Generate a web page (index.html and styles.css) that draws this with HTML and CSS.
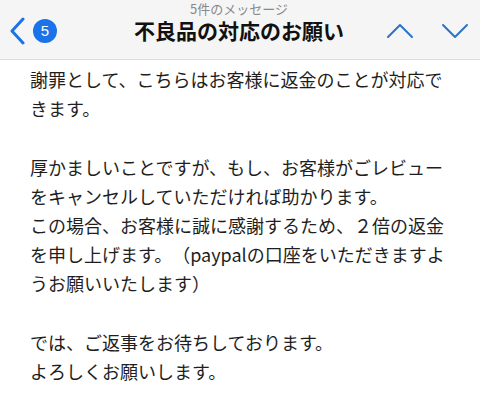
FILE: index.html
```html
<!DOCTYPE html>
<html lang="ja">
<head>
  <meta charset="UTF-8" />
  <title>不良品の対応のお願い</title>
  <link rel="stylesheet" href="styles.css">
</head>
<body>
  <div class="nav-bar">
    <div class="nav-left">
      <svg class="back" width="16" height="28" viewBox="0 0 16 28">
        <path d="M14 2 L3 14 L14 26" fill="none" stroke="#1a73e8" stroke-width="3" stroke-linecap="round" stroke-linejoin="round"/>
      </svg>
      <span class="badge">5</span>
    </div>

    <div class="nav-title">
      <div class="sub">5件のメッセージ</div>
      <div class="main">不良品の対応のお願い</div>
    </div>

    <div class="nav-right">
      <svg width="28" height="16" viewBox="0 0 28 16">
        <path d="M2 14 L14 2 L26 14" fill="none" stroke="#2a74c9" stroke-width="2" stroke-linecap="round" stroke-linejoin="round"/>
      </svg>
      <svg width="28" height="16" viewBox="0 0 28 16">
        <path d="M2 2 L14 14 L26 2" fill="none" stroke="#2a74c9" stroke-width="2" stroke-linecap="round" stroke-linejoin="round"/>
      </svg>
    </div>
  </div>

  <!-- message body -->
  <div class="message">
    <p>謝罪として、こちらはお客様に返金のことが対応で<br>きます。</p>
    <p>厚かましいことですが、もし、お客様がごレビュー<br>をキャンセルしていただければ助かります。<br>この場合、お客様に誠に感謝するため、２倍の返金<br>を申し上げます。（paypalの口座をいただきますよ<br>うお願いいたします）</p>
    <p>では、ご返事をお待ちしております。<br>よろしくお願いします。</p>
  </div>
</body>
</html>
```

FILE: styles.css
```css
body {
  margin: 0;
  background: #fff;
  font-family: "Noto Sans CJK JP", "Noto Sans", sans-serif;
  color: #1e1e1e;
}

.nav-bar {
  height: 60px;
  background: #f5f5f5;
  border-bottom: 1px solid #dcdcdc;
  display: flex;
  align-items: center;
  padding: 0 11px 0 9px;
  box-sizing: border-box;
}

.nav-left {
  display: flex;
  align-items: center;
  gap: 8px;
  width: 110px;
  margin-top: 2px;
}

.badge {
  width: 24px;
  height: 24px;
  border-radius: 50%;
  background: #1a73e8;
  color: #fff;
  font-family: "Liberation Sans", Arial, sans-serif;
  font-size: 15px;
  display: flex;
  align-items: center;
  justify-content: center;
}

.nav-title {
  flex: 1;
  text-align: center;
  align-self: flex-start;
  padding-top: 1px;
}

.nav-title .sub {
  font-size: 13px;
  color: #888;
  line-height: 16px;
}

.nav-title .main {
  font-size: 21px;
  font-weight: bold;
  color: #111;
  line-height: 26px;
}

.nav-right {
  display: flex;
  gap: 27px;
  margin-top: 2px;
  width: 110px;
  justify-content: flex-end;
}

.message {
  padding: 5px 0 0 30px;
  font-size: 18px;
  line-height: 29.2px;
  white-space: nowrap;
  text-spacing-trim: space-all;
}

.message p {
  margin: 0 0 29.2px;
}
```
